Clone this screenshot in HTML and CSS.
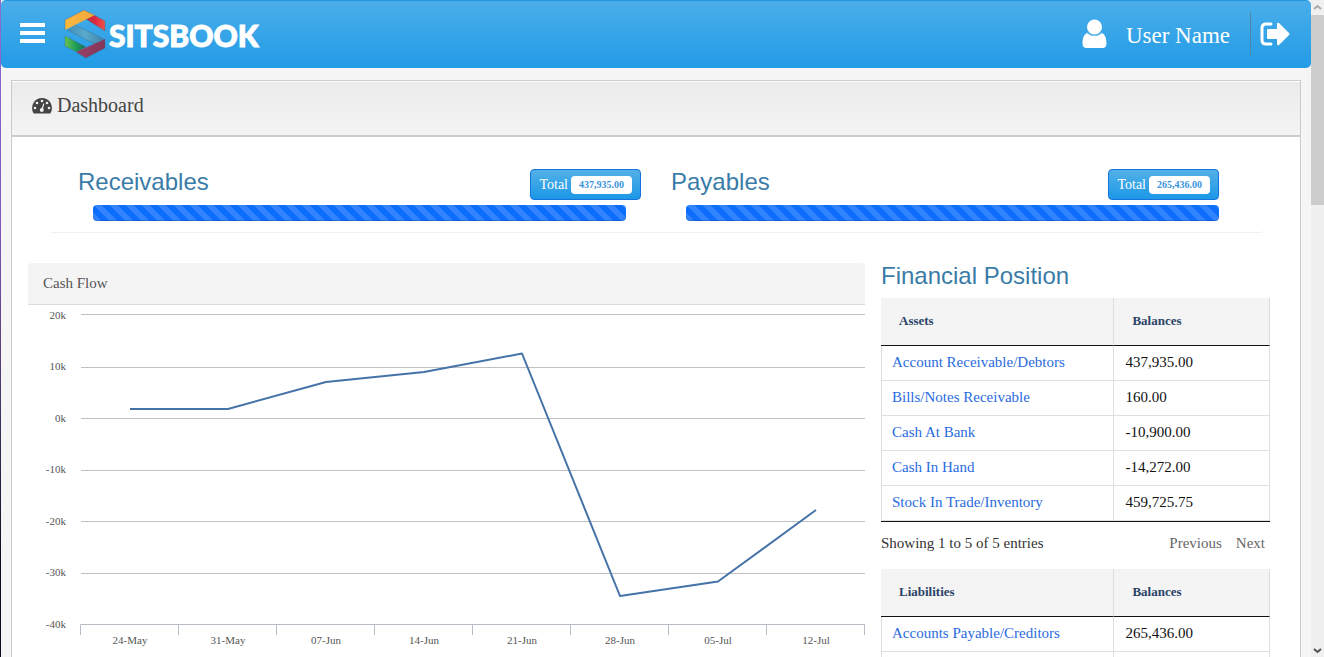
FILE: index.html
```html
<!DOCTYPE html>
<html lang="en">
<head>
<meta charset="utf-8">
<title>Sitsbook - Dashboard</title>
<link rel="stylesheet" href="styles.css">
</head>
<body>
<div class="app">
  <div class="edge"></div>
  <div class="page">
    <header class="topbar">
      <button class="icon-btn" type="button" aria-label="Menu">
        <svg width="26" height="22" viewBox="0 0 26 22"><path fill="#fff" d="M0 1h25v4H0zM0 9h25v4H0zM0 17h25v4H0z"/></svg>
      </button>
      <a class="brand" href="#">
        <svg width="42" height="50" viewBox="0 0 42 50">
          <defs>
            <linearGradient id="gy"><stop offset="0" stop-color="#fbb93f"/><stop offset="1" stop-color="#f2a73c"/></linearGradient>
            <linearGradient id="gr"><stop offset="0" stop-color="#b02a3c"/><stop offset=".5" stop-color="#e2283f"/><stop offset="1" stop-color="#ee5547"/></linearGradient>
            <linearGradient id="gb"><stop offset="0" stop-color="#3f8fba"/><stop offset=".5" stop-color="#5ba9cc"/><stop offset="1" stop-color="#3c83aa"/></linearGradient>
            <linearGradient id="gg"><stop offset="0" stop-color="#6cc24a"/><stop offset=".5" stop-color="#1f9f58"/><stop offset="1" stop-color="#1c6a55"/></linearGradient>
            <linearGradient id="gp"><stop offset="0" stop-color="#9a4068"/><stop offset="1" stop-color="#833658"/></linearGradient>
          </defs>
          <path fill="url(#gb)" d="M3 21l8-5 29 14-9 5z"/>
          <path fill="url(#gr)" d="M22 10l8-4 11 6v10z"/>
          <path fill="url(#gy)" d="M1 11L20 1l11 5L1 21z"/>
          <path fill="url(#gg)" d="M1 27l21 11-9 5L1 37z"/>
          <path fill="url(#gp)" d="M41 30v9L22 49l-10-6z"/>
          <path fill="none" stroke="#3c6c8a" stroke-opacity=".6" stroke-width=".7" d="M1 21V11L20 1l21 11v10L22 10M3 21l28 14M11 16l29 14M22 38L1 27v10l21 12 19-10v-9"/>
        </svg>
        <span class="brand-name">SITSBOOK</span>
      </a>
      <div class="account">
        <svg width="25" height="30" viewBox="0 0 25 30"><path fill="#fff" d="M5 14c2 2 4.500 3 7.500 3s5.500-1 7.500-3c3.500 2 4.500 6 4.500 10.500 0 3-1.500 4.500-4 4.500h-16c-2.500 0-4-1.500-4-4.500C.5 20 1.500 16 5 14z"/><circle cx="12.500" cy="8" r="7.500" fill="#fff"/><path fill="none" stroke="#8fcdf3" stroke-width=".7" d="M5.500 13.500c3.500 4 10.500 4 14 0"/></svg>
        <span class="user">User Name</span>
        <a class="logout" href="#" aria-label="Sign out">
          <svg width="30" height="24" viewBox="0 0 30 24"><path fill="none" stroke="#fff" stroke-width="3" stroke-linecap="round" d="M11 2H6C3.500 2 2 3.500 2 6v12c0 2.500 1.500 4 4 4h5"/><path fill="#fff" d="M8 7h9V2q0-2 2-1l10 10q1 1 0 2L19 23q-2 1-2-1v-5H8q-1 0-1-1V8q0-1 1-1z"/></svg>
        </a>
      </div>
    </header>

    <main class="panel">
      <h1 class="panel-title">
        <svg width="20" height="17" viewBox="0 0 20 17"><path fill="#444" d="M10 1a10 10 0 0 1 8.600 15q-.3.500-1 .5H2.400q-.7 0-1-.5A10 10 0 0 1 10 1z"/><g fill="#f0f0f0"><circle cx="3" cy="11" r="1.300"/><circle cx="5" cy="6" r="1.300"/><circle cx="10" cy="4" r="1.300"/><circle cx="15" cy="6" r="1.300"/><circle cx="17" cy="11" r="1.300"/><circle cx="9.800" cy="13" r="2"/><path d="M11.300 6.500l1 .3-1.600 6.200-1.500-.4z"/></g></svg>
        Dashboard
      </h1>

      <section class="stats">
        <div class="stat">
          <div class="stat-head">
            <h2 class="heading">Receivables</h2>
            <button class="total" type="button">Total <span class="badge">437,935.00</span></button>
          </div>
          <div class="bar"></div>
        </div>
        <div class="stat">
          <div class="stat-head stat-head-inset">
            <h2 class="heading">Payables</h2>
            <button class="total" type="button">Total <span class="badge">265,436.00</span></button>
          </div>
          <div class="bar"></div>
        </div>
      </section>

      <div class="columns">
        <section class="chart-card">
          <h3 class="chart-title">Cash Flow</h3>
          <svg class="chart" viewBox="0 0 837 352">
            <path class="grid" d="M53 9.500H837M53 62.500H837M53 113.500H837M53 165.500H837M53 216.500H837M53 268.500H837"/>
            <path class="axis" d="M52.500 330v-10.500H837.500M150.500 320v10M248.500 320v10M346.500 320v10M444.500 320v10M542.500 320v10M640.500 320v10M738.500 320v10M836.500 320v10"/>
            <g class="tick tick-y">
              <text x="38" y="14">20k</text><text x="38" y="65">10k</text><text x="38" y="117">0k</text><text x="38" y="168">-10k</text><text x="38" y="220">-20k</text><text x="38" y="271">-30k</text><text x="38" y="323">-40k</text>
            </g>
            <g class="tick tick-x">
              <text x="102" y="339">24-May</text><text x="200" y="339">31-May</text><text x="298" y="339">07-Jun</text><text x="396" y="339">14-Jun</text><text x="494" y="339">21-Jun</text><text x="592" y="339">28-Jun</text><text x="690" y="339">05-Jul</text><text x="788" y="339">12-Jul</text>
            </g>
            <polyline class="line" points="102,104 200,104 298,77 396,67 494,48.500 592,291 690,276.500 788,205"/>
          </svg>
        </section>

        <section class="position">
          <h2 class="heading">Financial Position</h2>
          <table class="ledger">
            <thead><tr><th>Assets</th><th>Balances</th></tr></thead>
            <tbody>
              <tr><td><a href="#">Account Receivable/Debtors</a></td><td>437,935.00</td></tr>
              <tr><td><a href="#">Bills/Notes Receivable</a></td><td>160.00</td></tr>
              <tr><td><a href="#">Cash At Bank</a></td><td>-10,900.00</td></tr>
              <tr><td><a href="#">Cash In Hand</a></td><td>-14,272.00</td></tr>
              <tr><td><a href="#">Stock In Trade/Inventory</a></td><td>459,725.75</td></tr>
            </tbody>
          </table>
          <div class="pager">
            <span>Showing 1 to 5 of 5 entries</span>
            <div class="pager-links"><button type="button">Previous</button><button type="button">Next</button></div>
          </div>
          <table class="ledger">
            <thead><tr><th>Liabilities</th><th>Balances</th></tr></thead>
            <tbody>
              <tr><td><a href="#">Accounts Payable/Creditors</a></td><td>265,436.00</td></tr>
              <tr><td></td><td></td></tr>
            </tbody>
          </table>
        </section>
      </div>
    </main>
  </div>
  <div class="scrollbar" aria-hidden="true">
    <svg class="arrow-up" width="13" height="15" viewBox="0 0 13 15"><path d="M3 9l3.500-3L10 9"/></svg>
    <div class="thumb"></div>
    <svg class="arrow-down" width="13" height="15" viewBox="0 0 13 15"><path d="M3 7l3.500 3L10 7"/></svg>
  </div>
</div>
</body>
</html>
```
FILE: styles.css
```css
* { box-sizing: border-box; }
body {
  margin: 0;
  height: 100vh;
  overflow: hidden;
  background: #f5f5f5;
  font-family: "Liberation Serif", "Times New Roman", serif;
  font-size: 14px;
  color: #333;
}
h1, h2, h3 { margin: 0; font-weight: 400; }
svg { display: block; }
a { text-decoration: none; }
button { font-family: inherit; cursor: pointer; }

.app {
  display: grid;
  grid-template-columns: 1px minmax(0, 1fr) 13px;
  grid-template-rows: 100vh;
}
.edge { background: linear-gradient(#8a6fd0, #8055b8 35%, #4a3a68 60%, #120a20 85%); }
.page { overflow: hidden; }

.topbar {
  display: flex;
  align-items: center;
  height: 68px;
  padding: 0 21px 2px 19px;
  border-top: 1px solid #2595dc;
  border-radius: 5px;
  background: linear-gradient(#4aaeea, #229be6);
}
.icon-btn { padding: 0 0 2px; border: 0; background: none; }
.brand { display: flex; align-items: center; gap: 3px; margin-left: 18px; }
.brand-name {
  font-family: Lato, sans-serif;
  font-weight: 900;
  font-size: 30px;
  line-height: 36px;
  padding-top: 3px;
  color: #fff;
  -webkit-text-stroke: 1px #fff;
}
.account { display: flex; align-items: center; margin-left: auto; }
.user { margin-left: 19px; padding-top: 5px; font-size: 23px; line-height: 28px; color: #fff; }
.logout {
  display: flex;
  align-items: center;
  height: 44px;
  margin-left: 20px;
  padding-left: 9px;
  border-left: 1px solid #4f86a8;
}

.panel {
  margin: 12px 10px 0;
  border: 1px solid #ccc;
  background: #fff;
}
.panel-title {
  display: flex;
  align-items: center;
  gap: 5px;
  height: 56px;
  padding: 0 20px 5px;
  border-bottom: 2px solid #ccc;
  background: linear-gradient(#ebebeb, #f4f4f4);
  box-shadow: inset 0 1px #fff;
  font-size: 20px;
  color: #444;
}
.heading {
  font-family: "Liberation Sans", Arial, sans-serif;
  font-size: 24px;
  line-height: 26px;
  color: #3a7ca8;
}

.stats {
  display: grid;
  grid-template-columns: 1fr 1fr;
  gap: 30px;
  margin: 0 36px 0 37px;
  padding: 32px 30px 11px 29px;
  border-bottom: 1px solid #f1f1f1;
  border-radius: 4px;
}
.stat-head { display: flex; justify-content: space-between; align-items: flex-start; height: 31px; }
.stat-head-inset { padding-right: 15px; }
.total {
  display: flex;
  align-items: center;
  gap: 3px;
  height: 31px;
  padding: 0 8px;
  border: 1px solid #1672dc;
  border-radius: 4px;
  background: linear-gradient(#52b0e8, #1c98e6);
  font-size: 14px;
  color: #fff;
}
.badge {
  padding: 0 8px;
  border-radius: 4px;
  background: #fff;
  font-size: 10px;
  font-weight: 700;
  line-height: 18px;
  color: #3a94dc;
}
.bar {
  height: 16px;
  margin: 5px 15px 0;
  border-radius: 4px;
  background-color: #0d6efd;
  background-image: linear-gradient(45deg, rgba(255,255,255,.15) 25%, transparent 25%, transparent 50%, rgba(255,255,255,.15) 50%, rgba(255,255,255,.15) 75%, transparent 75%);
  background-size: 16px 16px;
  box-shadow: inset 0 -1px rgba(0,0,0,.15);
}

.columns {
  display: grid;
  grid-template-columns: 837fr 389fr;
  align-items: start;
  gap: 16px;
  padding: 30px 30px 0 16px;
}
.chart-title {
  height: 42px;
  padding: 0 15px;
  border-bottom: 1px solid #dcdcdc;
  border-radius: 4px 4px 0 0;
  background: #f4f4f4;
  font-size: 15px;
  line-height: 41px;
  color: #555;
}
.chart { width: 100%; height: auto; }
.grid { fill: none; stroke: #c0c0c0; }
.axis { fill: none; stroke: #b8bec6; }
.line { fill: none; stroke: #4572a7; stroke-width: 2; stroke-linejoin: round; }
.tick { font-size: 11px; fill: #555; }
.tick-y { text-anchor: end; }
.tick-x { text-anchor: middle; }

.ledger {
  width: 100%;
  table-layout: fixed;
  border-collapse: separate;
  border-spacing: 0;
  border-bottom: 1px solid #111;
}
.heading + .ledger { margin-top: 9px; }
.ledger th {
  height: 48px;
  padding: 0 18px 2px;
  border-right: 1px solid #ddd;
  border-bottom: 1px solid #111;
  background: #f4f4f4;
  text-align: left;
  font-size: 13px;
  color: #2b4468;
}
.ledger th:first-child { width: 60%; }
.ledger td {
  height: 35px;
  padding: 0 11px 1px;
  border-right: 1px solid #e0e0e0;
  border-bottom: 1px solid #e0e0e0;
  font-size: 15px;
  color: #111;
}
.ledger td:first-child { padding-left: 10px; border-left: 1px solid #e0e0e0; }
.ledger a { color: #2a6be0; }
.pager {
  display: flex;
  justify-content: space-between;
  align-items: center;
  height: 47px;
  padding-bottom: 4px;
  font-size: 15px;
}
.pager-links { display: flex; gap: 14px; padding-right: 5px; }
.pager-links button { padding: 0; border: 0; background: none; font-size: 15px; color: #666; }

.scrollbar { display: flex; flex-direction: column; background: #f0f0f0; }
.scrollbar path { fill: none; stroke: #aaa; stroke-width: 2; }
.scrollbar .arrow-down path { stroke: #505050; }
.thumb { height: 190px; background: #cdcdcd; }
.arrow-down { margin-top: auto; }
```
